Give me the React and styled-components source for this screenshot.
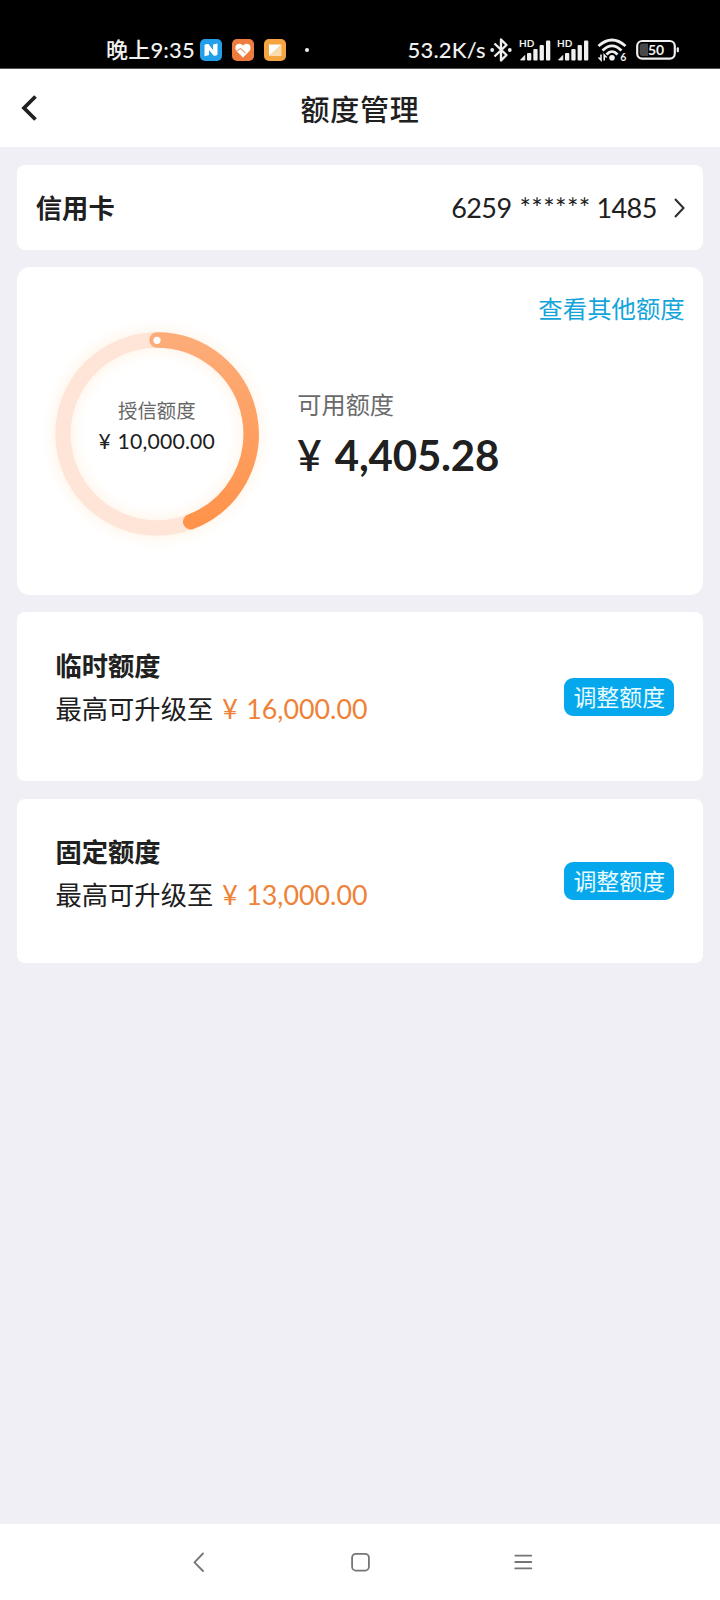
import React from "react";
import styled, { createGlobalStyle } from "styled-components";

const GlobalStyle = createGlobalStyle`
  * { box-sizing: border-box; }
  body {
    margin: 0;
    background: #efeff5;
    color: #202020;
    font-family: Lato, "Noto Sans CJK SC", sans-serif;
  }
`;

const Screen = styled.div`
  width: 720px;
  height: 1600px;
  display: flex;
  flex-direction: column;
  background: #efeff5;
  overflow: hidden;
`;

const StatusBar = styled.header`
  height: 69px;
  flex: none;
  display: flex;
  justify-content: space-between;
  background: #000;
  color: #f0f0f0;
  padding: 31px 41px 0 106px;
  border-bottom: 1px solid #555;
`;

const StatusGroup = styled.div`
  display: flex;
  align-items: center;
  height: 38px;
`;

const StatusText = styled.span`
  font-size: 22px;
  font-weight: 500;
  line-height: 38px;
  white-space: nowrap;
  width: ${(p) => p.$width}px;
  letter-spacing: ${(p) => p.$spacing || 0}px;
`;

const AppBadge = styled.svg`
  width: 22px;
  height: 22px;
  margin-right: 10px;
`;

const Dot = styled.span`
  width: 4px;
  height: 4px;
  border-radius: 50%;
  background: #f0f0f0;
  margin-left: 9px;
`;

const StatusIcon = styled.svg`
  display: block;
  height: 26px;
  width: ${(p) => p.$width}px;
  margin-left: ${(p) => p.$gap}px;
`;

const TitleBar = styled.div`
  height: 78px;
  flex: none;
  display: grid;
  grid-template-columns: 60px 1fr 60px;
  align-items: center;
  background: #fff;
`;

const BackIcon = styled.svg`
  width: 18px;
  height: 28px;
  margin-left: 20px;
`;

const Title = styled.h1`
  margin: 0;
  padding-top: 3px;
  text-align: center;
  font-size: 29px;
  line-height: 40px;
  font-weight: 500;
  letter-spacing: 0.8px;
`;

const Content = styled.main`
  flex: 1;
  display: flex;
  flex-direction: column;
  gap: 17.3px;
  padding: 18px 17.3px 0;
`;

const Card = styled.section`
  flex: none;
  height: ${(p) => p.$height}px;
  border-radius: ${(p) => p.$radius || 8}px;
  background: #fff;
`;

const AccountCard = styled(Card)`
  display: flex;
  align-items: center;
  justify-content: space-between;
  padding: 0 17.5px 0 18.5px;
`;

const AccountName = styled.span`
  font-size: 26.3px;
  line-height: 38px;
  font-weight: 700;
`;

const AccountPicker = styled.div`
  display: flex;
  align-items: center;
  gap: 17.5px;
`;

const CardNumber = styled.span`
  display: flex;
  font-size: 27px;
  line-height: 36px;
  letter-spacing: -0.6px;
`;

const Mask = styled.span`
  width: 85px;
  padding-left: 8px;
  letter-spacing: 0.4px;
`;

const Chevron = styled.svg`
  width: 11px;
  height: 20px;
`;

const QuotaCard = styled(Card)`
  display: flex;
  flex-direction: column;
  padding: 24.2px 18px 0 29.5px;
`;

const OtherLink = styled.a`
  align-self: flex-end;
  color: #13a5d9;
  font-size: 24.4px;
  line-height: 36px;
`;

const QuotaBody = styled.div`
  display: flex;
  margin-top: -3.5px;
`;

const Gauge = styled.div`
  display: grid;
  width: 220px;
  height: 220px;
  & > * { grid-area: 1 / 1; }
`;

const GaugeLabel = styled.div`
  display: flex;
  flex-direction: column;
  align-items: center;
  padding-top: 72.5px;
`;

const GaugeCaption = styled.span`
  color: #666;
  font-size: 19.4px;
  line-height: 30px;
`;

const GaugeAmount = styled.span`
  display: flex;
  font-size: 21.2px;
  line-height: 30px;
  letter-spacing: 0.2px;
`;

const GaugeCurrency = styled.span`
  width: 19px;
  font-weight: 400;
`;

const Available = styled.div`
  display: flex;
  flex-direction: column;
  padding: 63.5px 0 0 30.5px;
`;

const AvailableCaption = styled.span`
  color: #6a6a6a;
  font-size: 24.2px;
  line-height: 36px;
`;

const AvailableAmount = styled.strong`
  display: flex;
  margin-top: 4px;
  font-size: 42px;
  line-height: 56px;
  font-weight: 700;
  letter-spacing: -0.2px;
`;

const Currency = styled.span`
  width: 37.5px;
  font-weight: 600;
`;

const LimitCard = styled(Card)`
  display: flex;
  justify-content: space-between;
  align-items: flex-start;
  padding: 34.5px 28.3px 0 38.2px;
`;

const LimitInfo = styled.div`
  display: flex;
  flex-direction: column;
`;

const LimitTitle = styled.h2`
  margin: 0;
  font-size: 26.3px;
  line-height: 38px;
  font-weight: 700;
`;

const LimitText = styled.p`
  margin: 5px 0 0;
  display: flex;
  font-size: 26.3px;
  line-height: 38px;
`;

const LimitAmount = styled.span`
  display: flex;
  padding-left: 9px;
  color: #ee8237;
  font-size: 26.8px;
`;

const LimitCurrency = styled.span`
  width: 24px;
`;

const AdjustButton = styled.button`
  width: 110.3px;
  height: 38px;
  margin-top: ${(p) => p.$top}px;
  padding: 0;
  border: 0;
  border-radius: 9px;
  background: #05a8ec;
  color: #e9fbff;
  font-family: inherit;
  font-size: 22.9px;
  line-height: 38px;
`;

const NavBar = styled.nav`
  flex: none;
  height: 76px;
  display: flex;
  justify-content: center;
  gap: 143px;
  padding-top: 27.5px;
  background: #fff;
`;

const NavIcon = styled.svg`
  width: 20px;
  height: 20px;
  fill: none;
  stroke: #757575;
  stroke-width: 1.8;
  stroke-linecap: round;
  stroke-linejoin: round;
`;

const SvgText = styled.text`
  font-family: Lato, sans-serif;
  font-weight: 700;
  font-size: ${(p) => p.$size}px;
  fill: #f0f0f0;
`;

function Signal({ gap }) {
  return (
    <StatusIcon viewBox="0 0 32 26" $width={32} $gap={gap} fill="#f0f0f0">
      <SvgText x="0" y="9.5" $size={10}>HD</SvgText>
      <path d="M1.5 23 L5.8 18.5 V23Z" stroke="#f0f0f0" strokeWidth="0.8" strokeLinejoin="round" />
      <rect x="8" y="16" width="4.3" height="7.5" rx="1" />
      <rect x="14.3" y="12" width="4.3" height="11.5" rx="1" />
      <rect x="20.6" y="8" width="4.3" height="15.5" rx="1" />
      <rect x="27" y="3.5" width="4.3" height="20" rx="1" />
    </StatusIcon>
  );
}

function Bluetooth() {
  return (
    <StatusIcon viewBox="0 0 22 26" $width={22} $gap={4} fill="none" stroke="#f0f0f0" strokeWidth="2.4" strokeLinejoin="round">
      <path d="M4.5 6.5 L16.5 18 L11 23.5 V2.5 L16.5 8 L4.5 19.5" />
      <circle cx="2.2" cy="13" r="1.9" fill="#f0f0f0" stroke="none" />
      <circle cx="19.8" cy="13" r="1.9" fill="#f0f0f0" stroke="none" />
    </StatusIcon>
  );
}

function Wifi() {
  return (
    <StatusIcon viewBox="0 0 30 26" $width={30} $gap={8} fill="none" stroke="#f0f0f0" strokeWidth="2.7">
      <path d="M1.5 9 Q15 -3 28.5 9" />
      <path d="M5.5 13.5 Q15 4 24.5 13.5" />
      <path d="M9.5 17.5 Q15 11.5 20.5 17.5" />
      <circle cx="15" cy="20.8" r="2.8" fill="#f0f0f0" stroke="none" />
      <path d="M4 17.5 V23 L1.5 20.5 M7.2 23.5 V18 L9.7 20.5" strokeWidth="1.6" />
      <SvgText x="23.3" y="24" $size={10.5} stroke="none">6</SvgText>
    </StatusIcon>
  );
}

function Battery() {
  return (
    <StatusIcon viewBox="0 0 44 26" $width={44} $gap={8}>
      <rect x="2.2" y="4" width="37.6" height="17.6" rx="5" fill="none" stroke="#f0f0f0" strokeWidth="2.2" />
      <path d="M7.5 6.5 H13 V19 H7.5 Q4.7 19 4.7 16 V9.5 Q4.7 6.5 7.5 6.5Z" fill="#484848" />
      <rect x="41.7" y="10.3" width="2.2" height="5" rx="1" fill="#f0f0f0" />
      <SvgText x="21" y="17.7" $size={14} textAnchor="middle">50</SvgText>
    </StatusIcon>
  );
}

function QuotaRing() {
  return (
    <svg width="220" height="220" viewBox="0 0 220 220" overflow="visible">
      <defs>
        <linearGradient id="arc" x1="0" y1="0" x2="0" y2="1">
          <stop offset="0" stopColor="#fdac78" />
          <stop offset="1" stopColor="#ff934b" />
        </linearGradient>
        <filter id="glow" x="-20%" y="-20%" width="140%" height="140%">
          <feGaussianBlur stdDeviation="7" />
        </filter>
      </defs>
      <circle cx="110" cy="110" r="94" fill="none" stroke="#fff0e0" strokeOpacity="0.8" strokeWidth="20" filter="url(#glow)" />
      <circle cx="110" cy="110" r="94" fill="none" stroke="#fee5d7" strokeWidth="15.4" />
      <path d="M110 16 A94 94 0 0 1 143.7 197.8" fill="none" stroke="url(#arc)" strokeWidth="15.4" strokeLinecap="round" />
      <circle cx="110" cy="16.3" r="3.6" fill="#fff" />
    </svg>
  );
}

function Limit({ title, amount, height, buttonTop }) {
  return (
    <LimitCard $height={height}>
      <LimitInfo>
        <LimitTitle>{title}</LimitTitle>
        <LimitText>
          最高可升级至
          <LimitAmount>
            <LimitCurrency>¥</LimitCurrency>
            {amount}
          </LimitAmount>
        </LimitText>
      </LimitInfo>
      <AdjustButton $top={buttonTop}>调整额度</AdjustButton>
    </LimitCard>
  );
}

export default function App() {
  return (
    <Screen>
      <GlobalStyle />
      <StatusBar>
        <StatusGroup>
          <StatusText $width={94} $spacing={0.2}>晚上9:35</StatusText>
          <AppBadge viewBox="0 0 22 22">
            <rect width="22" height="22" rx="5" fill="#229fe9" />
            <path d="M4.5 6 Q6 4.5 8.5 5 L13 11 V5.5 L17.5 4.5 V15.5 Q16 17.5 13.5 16.5 L9 11 V16 L4.5 17.2Z" fill="#fff" />
          </AppBadge>
          <AppBadge viewBox="0 0 22 22">
            <rect width="22" height="22" rx="5" fill="#ef7c3f" />
            <path d="M11 18.5 L4.5 12 C1 7 6.5 2 11 6.5 C15.5 2 21 7 17.5 12Z" fill="#fff" />
            <path d="M4.5 12 L8.5 9.5 L13.5 14" fill="none" stroke="#f4a47c" strokeWidth="1.3" />
          </AppBadge>
          <AppBadge viewBox="0 0 22 22">
            <rect width="22" height="22" rx="5" fill="#f5a540" />
            <path d="M5 5.5 H17.5 L5 17Z" fill="#fff" />
            <path d="M17.5 5.5 V17 H12 L5 17Z" fill="#fbdcae" />
          </AppBadge>
          <Dot />
        </StatusGroup>
        <StatusGroup>
          <StatusText $width={78.5} $spacing={0.2}>53.2K/s</StatusText>
          <Bluetooth />
          <Signal gap={7} />
          <Signal gap={6} />
          <Wifi />
          <Battery />
        </StatusGroup>
      </StatusBar>

      <TitleBar>
        <BackIcon viewBox="0 0 18 28" fill="none" stroke="#202020" strokeWidth="3.8">
          <path d="M15.5 2.5 L4 14 L15.5 25.5" />
        </BackIcon>
        <Title>额度管理</Title>
      </TitleBar>

      <Content>
        <AccountCard $height={85}>
          <AccountName>信用卡</AccountName>
          <AccountPicker>
            <CardNumber>
              6259<Mask>******</Mask>1485
            </CardNumber>
            <Chevron viewBox="0 0 11 20" fill="none" stroke="#303030" strokeWidth="2.1">
              <path d="M1 1 L9.5 10 L1 19" />
            </Chevron>
          </AccountPicker>
        </AccountCard>

        <QuotaCard $height={327.5} $radius={13}>
          <OtherLink>查看其他额度</OtherLink>
          <QuotaBody>
            <Gauge>
              <QuotaRing />
              <GaugeLabel>
                <GaugeCaption>授信额度</GaugeCaption>
                <GaugeAmount>
                  <GaugeCurrency>¥</GaugeCurrency>10,000.00
                </GaugeAmount>
              </GaugeLabel>
            </Gauge>
            <Available>
              <AvailableCaption>可用额度</AvailableCaption>
              <AvailableAmount>
                <Currency>¥</Currency>4,405.28
              </AvailableAmount>
            </Available>
          </QuotaBody>
        </QuotaCard>

        <Limit title="临时额度" amount="16,000.00" height={169.3} buttonTop={31.4} />
        <Limit title="固定额度" amount="13,000.00" height={164.3} buttonTop={28.8} />
      </Content>

      <NavBar>
        <NavIcon viewBox="0 0 20 20"><path d="M16 1.5 L7.5 10.3 L16 19" /></NavIcon>
        <NavIcon viewBox="0 0 20 20"><rect x="2.1" y="1.8" width="16.8" height="16.8" rx="3.8" /></NavIcon>
        <NavIcon viewBox="0 0 20 20"><path d="M2.3 3.6 H18.3 M2.3 10 H18.3 M2.3 16.4 H18.3" /></NavIcon>
      </NavBar>
    </Screen>
  );
}
